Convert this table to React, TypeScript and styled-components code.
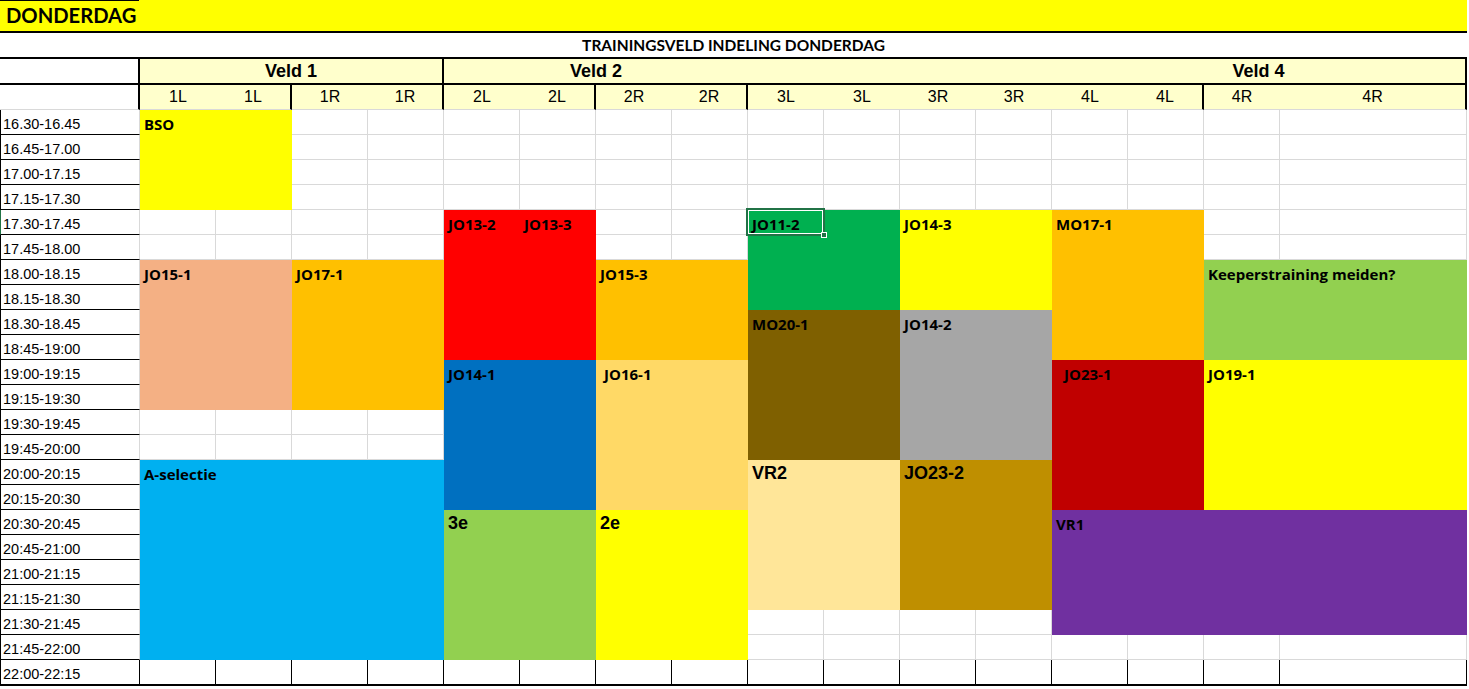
import React from 'react';
import styled, { createGlobalStyle, css } from 'styled-components';

const GlobalStyle = createGlobalStyle`
  html, body { margin: 0; padding: 0; background: #fff; }
  body { font-family: "Liberation Sans", Arial, sans-serif; color: #000; }
  *, *::before, *::after { box-sizing: border-box; }
`;

const GRID = '#d9d9d9';
const HEAD_BG = '#ffffcc';
const CALIBRI = 'Lato, "Liberation Sans", Arial, sans-serif';
const LABEL_FONT = '"Open Sans", Lato, "Liberation Sans", sans-serif';
const ARIAL = '"Liberation Sans", Arial, sans-serif';

const Sheet = styled.div`
  display: grid;
  grid-template-columns: 140px repeat(15, 76px) 187px;
  grid-template-rows: 33px 26px 26px 25px repeat(22, 25px) 26px;
  width: 1467px;
`;

const TitleBar = styled.div`
  grid-column: 1 / -1;
  grid-row: 1;
  display: flex;
  background: #ffff00;
  border-bottom: 2px solid #000;
`;

const TitleText = styled.div`
  width: 139px;
  border-top: 1px solid #000;
  padding-left: 6px;
  font: 700 20.2px/29px ${CALIBRI};
`;

const Subtitle = styled.div`
  grid-column: 1 / -1;
  grid-row: 2;
  border-bottom: 2px solid #000;
  padding-top: 1px;
  text-align: center;
  font: 700 15.5px/23px ${CALIBRI};
`;

const VeldCell = styled.div<{ $span: number; $filled?: boolean; $divider?: boolean }>`
  grid-row: 3;
  grid-column: span ${p => p.$span};
  background: ${p => (p.$filled ? HEAD_BG : '#fff')};
  border-bottom: 2px solid #000;
  border-right: ${p => (p.$divider ? '2px solid #000' : 'none')};
  padding-top: 1px;
  text-align: center;
  font: 700 18px/23px ${ARIAL};
`;

const SubCell = styled.div<{ $filled?: boolean; $divider?: boolean }>`
  grid-row: 4;
  background: ${p => (p.$filled ? HEAD_BG : '#fff')};
  border-bottom: 1px solid ${GRID};
  border-right: ${p => (p.$divider ? '2px solid #000' : 'none')};
  text-align: center;
  font: 400 16px/24px ${ARIAL};
`;

const TimeCell = styled.div<{ $row: number; $last?: boolean; $active?: boolean }>`
  grid-column: 1;
  grid-row: ${p => p.$row + 5};
  border-left: 1px solid ${p => (p.$active ? '#217346' : '#000')};
  border-bottom: ${p => (p.$last ? 2 : 1)}px solid #000;
  border-right: 1px solid ${p => (p.$last ? '#000' : GRID)};
  padding: 5px 0 0 2px;
  white-space: nowrap;
  font: 400 14.5px/18px ${ARIAL};
`;

const EmptyCell = styled.div<{ $col: number; $row: number; $last?: boolean }>`
  grid-column: ${p => p.$col + 2};
  grid-row: ${p => p.$row + 5};
  border-right: 1px solid ${p => (p.$last ? '#000' : GRID)};
  border-bottom: ${p => (p.$last ? '2px solid #000' : `1px solid ${GRID}`)};
`;

const Block = styled.div<{ $col: number; $row: number; $span: number; $rows: number; $bg: string }>`
  position: relative;
  grid-column: ${p => p.$col + 2} / span ${p => p.$span};
  grid-row: ${p => p.$row + 5} / span ${p => p.$rows};
  background: ${p => p.$bg};
`;

const Label = styled.div<{ $big?: boolean; $indent?: number }>`
  padding-left: ${p => 4 + (p.$indent ?? 0)}px;
  white-space: nowrap;
  color: #000;
  ${p =>
    p.$big
      ? css`
          padding-top: 3px;
          font: 700 18px/20px ${ARIAL};
        `
      : css`
          padding-top: 4px;
          font: 700 15px/20px ${LABEL_FONT};
        `}
`;

const Selection = styled.div`
  position: absolute;
  top: -2px;
  left: -2px;
  width: 79px;
  height: 28px;
  border: 2px solid #217346;
  box-shadow: inset 0 0 0 1px #fff;
  pointer-events: none;
`;

const Handle = styled.div`
  position: absolute;
  right: -4px;
  bottom: -4px;
  width: 6px;
  height: 6px;
  background: #217346;
  border: 1px solid #fff;
`;

type Slot = {
  label: string;
  col: number;
  span: number;
  row: number;
  rows: number;
  bg: string;
  big?: boolean;
  indent?: number;
  selected?: boolean;
};

const TIMES = [
  '16.30-16.45', '16.45-17.00', '17.00-17.15', '17.15-17.30', '17.30-17.45',
  '17.45-18.00', '18.00-18.15', '18.15-18.30', '18.30-18.45', '18:45-19:00',
  '19:00-19:15', '19:15-19:30', '19:30-19:45', '19:45-20:00', '20:00-20:15',
  '20:15-20:30', '20:30-20:45', '20:45-21:00', '21:00-21:15', '21:15-21:30',
  '21:30-21:45', '21:45-22:00', '22:00-22:15',
];

const SUBS = ['1L', '1L', '1R', '1R', '2L', '2L', '2R', '2R', '3L', '3L', '3R', '3R', '4L', '4L', '4R', '4R'];
const SUB_DIVIDERS = new Set([1, 3, 5, 7, 13, 15]);

const SLOTS: Slot[] = [
  { label: 'BSO', col: 0, span: 2, row: 0, rows: 4, bg: '#ffff00' },
  { label: 'JO13-2', col: 4, span: 1, row: 4, rows: 6, bg: '#ff0000' },
  { label: 'JO13-3', col: 5, span: 1, row: 4, rows: 6, bg: '#ff0000' },
  { label: 'JO11-2', col: 8, span: 2, row: 4, rows: 4, bg: '#00b050', selected: true },
  { label: 'JO14-3', col: 10, span: 2, row: 4, rows: 4, bg: '#ffff00' },
  { label: 'MO17-1', col: 12, span: 2, row: 4, rows: 6, bg: '#ffc000' },
  { label: 'JO15-1', col: 0, span: 2, row: 6, rows: 6, bg: '#f4b084' },
  { label: 'JO17-1', col: 2, span: 2, row: 6, rows: 6, bg: '#ffc000' },
  { label: 'JO15-3', col: 6, span: 2, row: 6, rows: 4, bg: '#ffc000' },
  { label: 'Keeperstraining meiden?', col: 14, span: 2, row: 6, rows: 4, bg: '#92d050' },
  { label: 'MO20-1', col: 8, span: 2, row: 8, rows: 6, bg: '#7f6000' },
  { label: 'JO14-2', col: 10, span: 2, row: 8, rows: 6, bg: '#a6a6a6' },
  { label: 'JO14-1', col: 4, span: 2, row: 10, rows: 6, bg: '#0070c0' },
  { label: 'JO16-1', col: 6, span: 2, row: 10, rows: 6, bg: '#ffd966', indent: 4 },
  { label: 'JO23-1', col: 12, span: 2, row: 10, rows: 6, bg: '#c00000', indent: 8 },
  { label: 'JO19-1', col: 14, span: 2, row: 10, rows: 6, bg: '#ffff00' },
  { label: 'A-selectie', col: 0, span: 4, row: 14, rows: 8, bg: '#00b0f0' },
  { label: 'VR2', col: 8, span: 2, row: 14, rows: 6, bg: '#ffe699', big: true },
  { label: 'JO23-2', col: 10, span: 2, row: 14, rows: 6, bg: '#bf8f00', big: true },
  { label: '3e', col: 4, span: 2, row: 16, rows: 6, bg: '#92d050', big: true },
  { label: '2e', col: 6, span: 2, row: 16, rows: 6, bg: '#ffff00', big: true },
  { label: 'VR1', col: 12, span: 4, row: 16, rows: 5, bg: '#7030a0' },
];

const NUM_COLS = 16;
const NUM_ROWS = TIMES.length;

function emptyCells() {
  const taken = new Set<string>();
  SLOTS.forEach(s => {
    for (let r = s.row; r < s.row + s.rows; r++)
      for (let c = s.col; c < s.col + s.span; c++) taken.add(`${r}-${c}`);
  });
  const out: { row: number; col: number }[] = [];
  for (let r = 0; r < NUM_ROWS; r++)
    for (let c = 0; c < NUM_COLS; c++) if (!taken.has(`${r}-${c}`)) out.push({ row: r, col: c });
  return out;
}

export default function App() {
  const empties = emptyCells();
  const lastRow = NUM_ROWS - 1;
  return (
    <>
      <GlobalStyle />
      <Sheet>
        <TitleBar>
          <TitleText>DONDERDAG</TitleText>
        </TitleBar>
        <Subtitle>TRAININGSVELD INDELING DONDERDAG</Subtitle>

        <VeldCell $span={1} $divider />
        <VeldCell $span={4} $filled $divider>Veld 1</VeldCell>
        <VeldCell $span={4} $filled>Veld 2</VeldCell>
        <VeldCell $span={4} $filled />
        <VeldCell $span={4} $filled $divider>Veld 4</VeldCell>

        <SubCell $divider />
        {SUBS.map((s, i) => (
          <SubCell key={i} $filled $divider={SUB_DIVIDERS.has(i)}>
            {s}
          </SubCell>
        ))}

        {TIMES.map((t, r) => (
          <TimeCell key={t} $row={r} $last={r === lastRow} $active={r === 4}>
            {t}
          </TimeCell>
        ))}

        {empties.map(e => (
          <EmptyCell key={`${e.row}-${e.col}`} $row={e.row} $col={e.col} $last={e.row === lastRow} />
        ))}

        {SLOTS.map(s => (
          <Block key={s.label} $col={s.col} $row={s.row} $span={s.span} $rows={s.rows} $bg={s.bg}>
            <Label $big={s.big} $indent={s.indent}>
              {s.label}
            </Label>
            {s.selected && (
              <Selection>
                <Handle />
              </Selection>
            )}
          </Block>
        ))}
      </Sheet>
    </>
  );
}
